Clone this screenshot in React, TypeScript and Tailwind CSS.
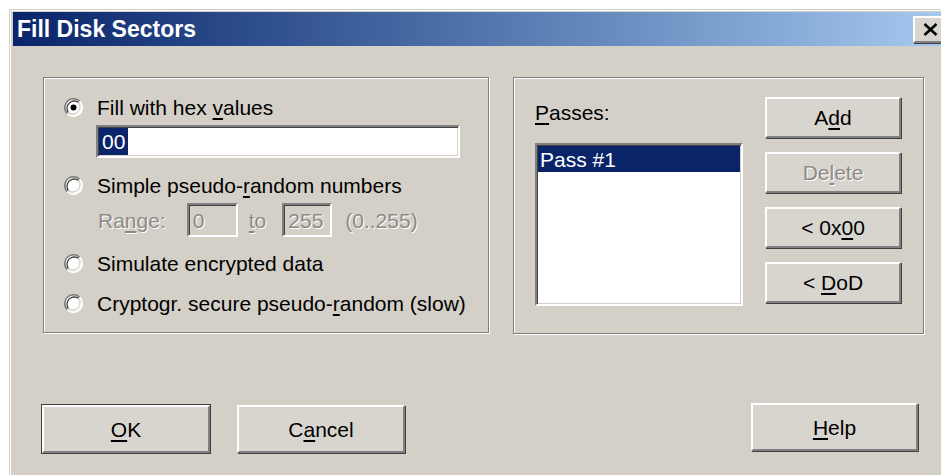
import React from "react";

// Classic dialog pieces
const raised =
  "border-2 border-t-white border-l-white border-b-[#808080] border-r-[#808080] bg-[#d8d5ce] shadow-[1px_1px_0_#404040]";
const sunken =
  "border-2 border-t-[#808080] border-l-[#808080] border-b-white border-r-white shadow-[inset_1px_1px_0_#404040,inset_-1px_-1px_0_#d4d0c8]";
const etched =
  "border border-[#808080] shadow-[inset_1px_1px_0_#ffffff,1px_1px_0_#ffffff]";
const disabledText = "text-[#8d8a85] [text-shadow:1px_1px_0_#ffffff]";

const Key = ({ children }: { children: React.ReactNode }) => (
  <span className="underline decoration-[1.5px] underline-offset-[3px]">
    {children}
  </span>
);

const Radio = ({ checked }: { checked?: boolean }) => (
  <svg width="19" height="19" viewBox="0 0 19 19" className="shrink-0">
    <circle cx="9.5" cy="9.5" r="8" fill="#fff" />
    <path d="M3.3 15.7 A8.75 8.75 0 0 1 15.7 3.3" stroke="#808080" strokeWidth="1.6" fill="none" />
    <path d="M4.4 14.6 A7.3 7.3 0 0 1 14.6 4.4" stroke="#404040" strokeWidth="1.3" fill="none" />
    <path d="M15.7 3.3 A8.75 8.75 0 0 1 3.3 15.7" stroke="#ffffff" strokeWidth="1.6" fill="none" />
    <path d="M14.6 4.4 A7.3 7.3 0 0 1 4.4 14.6" stroke="#d4d0c8" strokeWidth="1.3" fill="none" />
    {checked && <circle cx="9.5" cy="9.5" r="3" fill="#000" />}
  </svg>
);

const Button = ({
  children,
  className = "",
  disabled,
}: {
  children: React.ReactNode;
  className?: string;
  disabled?: boolean;
}) => (
  <div
    className={`${raised} flex items-center justify-center text-[21px] leading-none ${
      disabled ? disabledText : "text-black"
    } ${className}`}
  >
    <span className="whitespace-pre">{children}</span>
  </div>
);

export default function App() {
  return (
    <div className="w-[941px] h-[475px] overflow-hidden bg-white font-['Liberation_Sans',Arial,sans-serif] text-black">
      <div className="ml-[9px] mt-[9px] h-[480px] w-[950px] border-l border-t border-[#d4d0c8]">
        <div className="h-full border-l border-t border-white bg-[#d4d0c8] pl-[2px] pt-[1px]">
          {/* title bar */}
          <div className="flex h-[34px] w-[936px] items-center justify-between bg-linear-to-r from-[#0a246a] to-[#a6caf0] pl-[4px] pr-[2px]">
            <span className="text-[23px] font-bold leading-none text-white">
              Fill Disk Sectors
            </span>
            <div className={`${raised} flex h-[27px] w-[34px] items-center justify-center`}>
              <svg width="15" height="13" viewBox="0 0 15 13">
                <path d="M1.5 1 L13.5 12 M13.5 1 L1.5 12" stroke="#000" strokeWidth="2.6" />
              </svg>
            </div>
          </div>

          {/* group boxes */}
          <div className="mt-[31px] flex h-[257px] gap-[24px] pl-[30px]">
            <div className={`${etched} h-[256px] w-[446px] pl-[20px] pt-[14px] text-[21px] leading-none`}>
              <div className="flex h-[30px] items-center gap-[14px]">
                <Radio checked />
                <span>
                  Fill with hex <Key>v</Key>alues
                </span>
              </div>
              <div className={`${sunken} ml-[32px] mt-[3px] flex h-[33px] w-[364px] items-center bg-white pl-[1px]`}>
                <span className="flex h-[27px] items-center bg-[#0a246a] px-[3px] text-white">
                  00
                </span>
              </div>

              <div className="mt-[12px] flex h-[30px] items-center gap-[14px]">
                <Radio />
                <span>
                  Simple pseudo-<Key>r</Key>andom numbers
                </span>
              </div>
              <div className={`ml-[34px] mt-[3px] flex h-[34px] items-center ${disabledText}`}>
                <span>
                  Ra<Key>n</Key>ge:
                </span>
                <div className={`${sunken} ml-[21px] flex h-[34px] w-[51px] items-center pl-[4px]`}>
                  0
                </div>
                <span className="ml-[11px]">
                  <Key>t</Key>o
                </span>
                <div className={`${sunken} ml-[16px] flex h-[34px] w-[50px] items-center pl-[4px]`}>
                  255
                </div>
                <span className="ml-[13px]">(0..255)</span>
              </div>

              <div className="mt-[11px] flex h-[30px] items-center gap-[14px]">
                <Radio />
                <span>Simulate encrypted data</span>
              </div>
              <div className="mt-[10px] flex h-[30px] items-center gap-[14px]">
                <Radio />
                <span>
                  Cryptogr. secure pseudo-<Key>r</Key>andom (slow)
                </span>
              </div>
            </div>

            <div className={`${etched} flex h-[257px] w-[411px] pl-[21px] pt-[19px] text-[21px] leading-none`}>
              <div className="flex flex-col">
                <div className="flex h-[30px] items-center">
                  <span>
                    <Key>P</Key>asses:
                  </span>
                </div>
                <div className={`${sunken} mt-[16px] h-[163px] w-[208px] bg-white p-[1px]`}>
                  <div className="flex h-[26px] items-center bg-[#0a246a] pl-[2px] text-white">
                    Pass #1
                  </div>
                </div>
              </div>
              <div className="ml-[22px] flex flex-col gap-[14px]">
                <Button className="h-[41px] w-[136px]">
                  A<Key>d</Key>d
                </Button>
                <Button className="h-[41px] w-[136px]" disabled>
                  De<Key>l</Key>ete
                </Button>
                <Button className="h-[41px] w-[136px]">
                  {"< 0x"}
                  <Key>0</Key>0
                </Button>
                <Button className="h-[41px] w-[136px]">
                  {"< "}
                  <Key>D</Key>oD
                </Button>
              </div>
            </div>
          </div>

          {/* dialog buttons */}
          <div className="mt-[71px] flex pl-[29px]">
            <Button className="h-[48px] w-[168px] outline outline-1 outline-[#404040]">
              <Key>O</Key>K
            </Button>
            <Button className="ml-[27px] h-[48px] w-[168px]">
              C<Key>a</Key>ncel
            </Button>
            <Button className="-mt-[2px] ml-[346px] h-[48px] w-[167px]">
              <Key>H</Key>elp
            </Button>
          </div>
        </div>
      </div>
    </div>
  );
}
